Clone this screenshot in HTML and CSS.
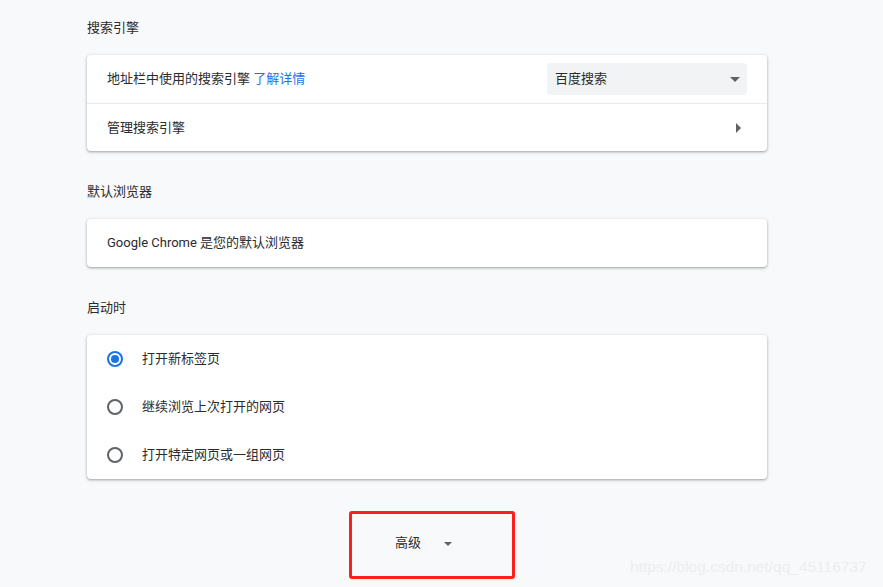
FILE: index.html
```html
<!DOCTYPE html>
<html lang="zh">
<head>
<meta charset="utf-8">
<link rel="stylesheet" href="styles.css">
</head>
<body>
<div class="page">
  <h2 class="heading first">搜索引擎</h2>
  <div class="card">
    <div class="row">
      <span class="label">地址栏中使用的搜索引擎 <a class="link">了解详情</a></span>
      <div class="select"><span>百度搜索</span><span class="caret-down"></span></div>
    </div>
    <div class="row divided">
      <span class="label">管理搜索引擎</span>
      <span class="caret-right"></span>
    </div>
  </div>

  <h2 class="heading">默认浏览器</h2>
  <div class="card">
    <div class="row">
      <span class="label latin">Google Chrome 是您的默认浏览器</span>
    </div>
  </div>

  <h2 class="heading">启动时</h2>
  <div class="card">
    <div class="row radio-row">
      <span class="radio checked"></span>
      <span class="label">打开新标签页</span>
    </div>
    <div class="row radio-row">
      <span class="radio"></span>
      <span class="label">继续浏览上次打开的网页</span>
    </div>
    <div class="row radio-row">
      <span class="radio"></span>
      <span class="label">打开特定网页或一组网页</span>
    </div>
  </div>

  <div class="advanced-wrap">
    <div class="advanced">
      <span class="adv-text">高级</span>
      <span class="caret-down small"></span>
    </div>
  </div>
</div>
<div class="watermark">https://blog.csdn.net/qq_45116737</div>
</body>
</html>
```

FILE: styles.css
```css
html, body {
  margin: 0;
  padding: 0;
  background: #f8f9fa;
}
body {
  width: 883px;
  height: 587px;
  overflow: hidden;
  position: relative;
  font-family: Roboto, "Noto Sans CJK SC", sans-serif;
  font-size: 13px;
  color: #2a2b2e;
}
.page {
  padding: 18px 0 0 87px;
  width: 680px;
}
.heading {
  margin: 31px 0 17px 0;
  font-size: 13px;
  font-weight: 400;
  line-height: 20px;
  color: #2a2b2e;
}
.heading.first {
  margin-top: 0;
}
.card {
  background: #fff;
  border-radius: 4px;
  box-shadow: 0 1px 2px rgba(60, 64, 67, 0.3), 0 1px 3px 1px rgba(60, 64, 67, 0.15);
}
.row {
  height: 48px;
  box-sizing: border-box;
  display: flex;
  align-items: center;
  justify-content: space-between;
  padding: 0 20px;
}
.row.divided {
  border-top: 1px solid #e8eaed;
}
.label {
  line-height: 20px;
  color: #2a2b2e;
}
.link {
  color: #1a73e8;
  text-decoration: none;
}
.select {
  width: 200px;
  height: 32px;
  box-sizing: border-box;
  background: #f1f3f4;
  border-radius: 4px;
  display: flex;
  align-items: center;
  justify-content: space-between;
  padding: 0 7px 3px 8px;
  color: #2a2b2e;
}
.select .caret-down {
  margin-top: 3px;
}
.caret-down {
  width: 0;
  height: 0;
  border-left: 5px solid transparent;
  border-right: 5px solid transparent;
  border-top: 5px solid #5f6368;
}
.caret-down.small {
  border-left-width: 4px;
  border-right-width: 4px;
  border-top-width: 4px;
  margin-top: 4px;
}
.caret-right {
  width: 0;
  height: 0;
  border-top: 5px solid transparent;
  border-bottom: 5px solid transparent;
  border-left: 5px solid #5f6368;
  margin-right: 6px;
}
.radio-row {
  justify-content: flex-start;
}
.radio {
  width: 16px;
  height: 16px;
  box-sizing: border-box;
  border: 2px solid #5f6368;
  border-radius: 50%;
  margin-right: 19px;
  flex: none;
  position: relative;
}
.radio.checked {
  border-color: #1a73e8;
}
.radio.checked::after {
  content: "";
  position: absolute;
  left: 2px;
  top: 2px;
  width: 8px;
  height: 8px;
  border-radius: 50%;
  background: #1a73e8;
}
.advanced-wrap {
  padding-top: 32px;
  padding-left: 262px;
}
.advanced {
  width: 166px;
  height: 68px;
  box-sizing: border-box;
  border: 3px solid #ff1f1a;
  border-radius: 3px;
  display: flex;
  align-items: center;
  padding-left: 43px;
  padding-bottom: 7px;
}
.adv-text {
  margin-right: 23px;
  color: #2a2b2e;
}
.watermark {
  position: absolute;
  left: 630px;
  top: 558px;
  font-family: "Liberation Sans", Arial, sans-serif;
  font-size: 15.5px;
  color: #eceef0;
}
```
